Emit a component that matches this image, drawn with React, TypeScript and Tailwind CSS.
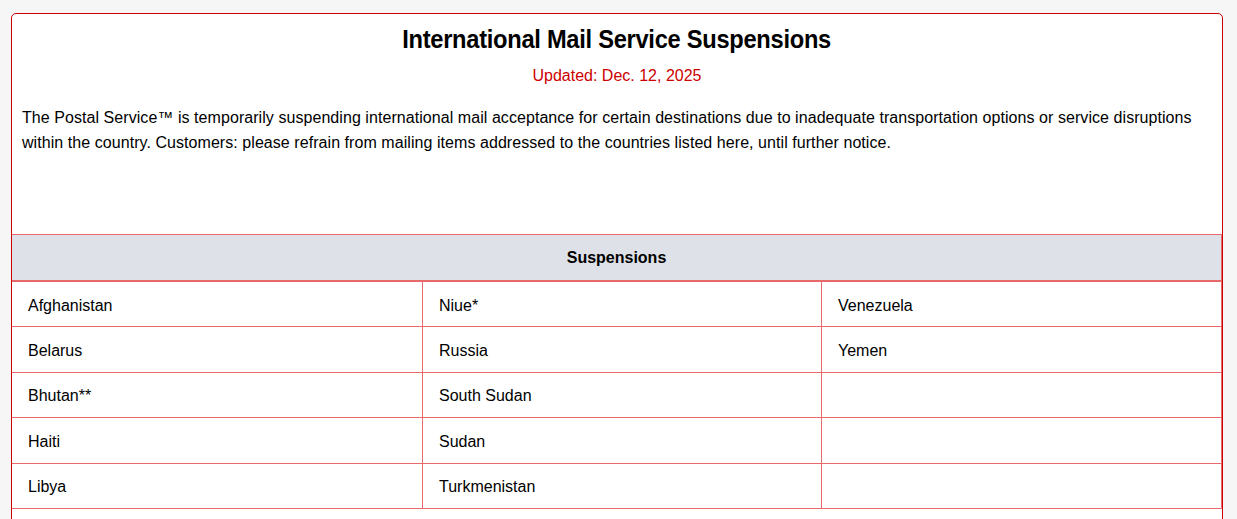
import React from 'react';

const rows: [string, string, string][] = [
  ['Afghanistan', 'Niue*', 'Venezuela'],
  ['Belarus', 'Russia', 'Yemen'],
  ['Bhutan**', 'South Sudan', ''],
  ['Haiti', 'Sudan', ''],
  ['Libya', 'Turkmenistan', ''],
];

const App: React.FC = () => {
  return (
    <div className="min-h-screen bg-[#f6f6f6] pt-[13px] pl-[11px] pr-[14px] font-['Liberation_Sans',Arial,sans-serif] text-black">
      <div className="bg-white border border-[#cc0000] rounded-[5px] pb-10">
        <div className="px-[10px] pt-[8px]">
          {/* condensed headline: no narrow face installed, so squeeze Liberation Sans */}
          <h1 className="text-center text-[26px] leading-[34px] font-bold">
            <span className="inline-block scale-x-[0.91] tracking-[-0.3px]">International Mail Service Suspensions</span>
          </h1>
          <p className="text-center text-[#cc0000] text-base leading-6 mt-[8px]">Updated: Dec. 12, 2025</p>
          <p className="text-base leading-[25px] mt-[17px] tracking-[0.06px]">
            The Postal Service™ is temporarily suspending international mail acceptance for certain destinations due to inadequate transportation options or service disruptions within the country. Customers: please refrain from mailing items addressed to the countries listed here, until further notice.
          </p>
        </div>
        <div className="mt-[79px] border-t border-r border-[#e8696c]">
          <div className="bg-[#dee2e8] h-[47px] flex items-center justify-center font-bold text-base border-b-2 border-[#e8696c]">
            Suspensions
          </div>
          {rows.map((r, i) => (
            <div key={i} className="grid grid-cols-[411px_399px_1fr] border-b border-[#e8696c]">
              {r.map((c, j) => (
                <div
                  key={j}
                  className={`h-[44.4px] flex items-center pl-4 pt-[3px] text-base ${j < 2 ? 'border-r border-[#e8696c]' : ''}`}
                >
                  {c}
                </div>
              ))}
            </div>
          ))}
        </div>
      </div>
    </div>
  );
};

export default App;
